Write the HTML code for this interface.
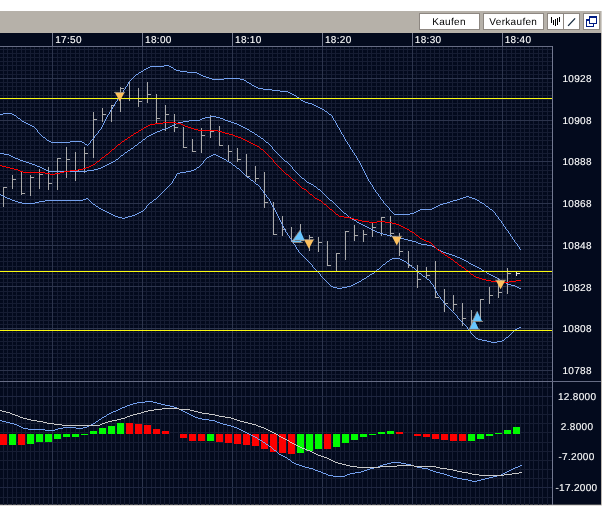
<!DOCTYPE html>
<html><head><meta charset="utf-8"><title>Chart</title>
<style>html,body{margin:0;padding:0;background:#fff;overflow:hidden}svg{display:block;will-change:transform}text{font-family:"Liberation Sans",sans-serif;font-size:10px;letter-spacing:0.32px;text-rendering:geometricPrecision;stroke-width:0.12px}</style>
</head><body>
<svg width="603" height="507" viewBox="0 0 603 507">
<rect x="0" y="0" width="603" height="507" fill="#ffffff"/>
<rect x="0" y="11" width="601.6" height="22" fill="#b6b1a9"/>
<rect x="0" y="33" width="601.8" height="472.4" fill="#aca69e"/>
<rect x="0" y="33" width="601" height="471.6" fill="#030a1d"/>
<g shape-rendering="crispEdges">
<rect x="3" y="47" width="1" height="334" fill="#161d33"/>
<rect x="3" y="382" width="1" height="123" fill="#161d33"/>
<rect x="7" y="47" width="1" height="334" fill="#161d33"/>
<rect x="7" y="382" width="1" height="123" fill="#161d33"/>
<rect x="12" y="47" width="1" height="334" fill="#161d33"/>
<rect x="12" y="382" width="1" height="123" fill="#161d33"/>
<rect x="16" y="47" width="1" height="334" fill="#161d33"/>
<rect x="16" y="382" width="1" height="123" fill="#161d33"/>
<rect x="21" y="47" width="1" height="334" fill="#161d33"/>
<rect x="21" y="382" width="1" height="123" fill="#161d33"/>
<rect x="25" y="47" width="1" height="334" fill="#161d33"/>
<rect x="25" y="382" width="1" height="123" fill="#161d33"/>
<rect x="30" y="47" width="1" height="334" fill="#161d33"/>
<rect x="30" y="382" width="1" height="123" fill="#161d33"/>
<rect x="34" y="47" width="1" height="334" fill="#161d33"/>
<rect x="34" y="382" width="1" height="123" fill="#161d33"/>
<rect x="39" y="47" width="1" height="334" fill="#161d33"/>
<rect x="39" y="382" width="1" height="123" fill="#161d33"/>
<rect x="43" y="47" width="1" height="334" fill="#161d33"/>
<rect x="43" y="382" width="1" height="123" fill="#161d33"/>
<rect x="48" y="47" width="1" height="334" fill="#161d33"/>
<rect x="48" y="382" width="1" height="123" fill="#161d33"/>
<rect x="52" y="47" width="1" height="334" fill="#161d33"/>
<rect x="52" y="382" width="1" height="123" fill="#161d33"/>
<rect x="57" y="47" width="1" height="334" fill="#161d33"/>
<rect x="57" y="382" width="1" height="123" fill="#161d33"/>
<rect x="61" y="47" width="1" height="334" fill="#161d33"/>
<rect x="61" y="382" width="1" height="123" fill="#161d33"/>
<rect x="66" y="47" width="1" height="334" fill="#161d33"/>
<rect x="66" y="382" width="1" height="123" fill="#161d33"/>
<rect x="70" y="47" width="1" height="334" fill="#161d33"/>
<rect x="70" y="382" width="1" height="123" fill="#161d33"/>
<rect x="75" y="47" width="1" height="334" fill="#161d33"/>
<rect x="75" y="382" width="1" height="123" fill="#161d33"/>
<rect x="79" y="47" width="1" height="334" fill="#161d33"/>
<rect x="79" y="382" width="1" height="123" fill="#161d33"/>
<rect x="84" y="47" width="1" height="334" fill="#161d33"/>
<rect x="84" y="382" width="1" height="123" fill="#161d33"/>
<rect x="88" y="47" width="1" height="334" fill="#161d33"/>
<rect x="88" y="382" width="1" height="123" fill="#161d33"/>
<rect x="93" y="47" width="1" height="334" fill="#161d33"/>
<rect x="93" y="382" width="1" height="123" fill="#161d33"/>
<rect x="97" y="47" width="1" height="334" fill="#161d33"/>
<rect x="97" y="382" width="1" height="123" fill="#161d33"/>
<rect x="102" y="47" width="1" height="334" fill="#161d33"/>
<rect x="102" y="382" width="1" height="123" fill="#161d33"/>
<rect x="106" y="47" width="1" height="334" fill="#161d33"/>
<rect x="106" y="382" width="1" height="123" fill="#161d33"/>
<rect x="111" y="47" width="1" height="334" fill="#161d33"/>
<rect x="111" y="382" width="1" height="123" fill="#161d33"/>
<rect x="115" y="47" width="1" height="334" fill="#161d33"/>
<rect x="115" y="382" width="1" height="123" fill="#161d33"/>
<rect x="120" y="47" width="1" height="334" fill="#161d33"/>
<rect x="120" y="382" width="1" height="123" fill="#161d33"/>
<rect x="124" y="47" width="1" height="334" fill="#161d33"/>
<rect x="124" y="382" width="1" height="123" fill="#161d33"/>
<rect x="129" y="47" width="1" height="334" fill="#161d33"/>
<rect x="129" y="382" width="1" height="123" fill="#161d33"/>
<rect x="133" y="47" width="1" height="334" fill="#161d33"/>
<rect x="133" y="382" width="1" height="123" fill="#161d33"/>
<rect x="138" y="47" width="1" height="334" fill="#161d33"/>
<rect x="138" y="382" width="1" height="123" fill="#161d33"/>
<rect x="142" y="47" width="1" height="334" fill="#161d33"/>
<rect x="142" y="382" width="1" height="123" fill="#161d33"/>
<rect x="146" y="47" width="1" height="334" fill="#161d33"/>
<rect x="146" y="382" width="1" height="123" fill="#161d33"/>
<rect x="151" y="47" width="1" height="334" fill="#161d33"/>
<rect x="151" y="382" width="1" height="123" fill="#161d33"/>
<rect x="155" y="47" width="1" height="334" fill="#161d33"/>
<rect x="155" y="382" width="1" height="123" fill="#161d33"/>
<rect x="160" y="47" width="1" height="334" fill="#161d33"/>
<rect x="160" y="382" width="1" height="123" fill="#161d33"/>
<rect x="164" y="47" width="1" height="334" fill="#161d33"/>
<rect x="164" y="382" width="1" height="123" fill="#161d33"/>
<rect x="169" y="47" width="1" height="334" fill="#161d33"/>
<rect x="169" y="382" width="1" height="123" fill="#161d33"/>
<rect x="173" y="47" width="1" height="334" fill="#161d33"/>
<rect x="173" y="382" width="1" height="123" fill="#161d33"/>
<rect x="178" y="47" width="1" height="334" fill="#161d33"/>
<rect x="178" y="382" width="1" height="123" fill="#161d33"/>
<rect x="182" y="47" width="1" height="334" fill="#161d33"/>
<rect x="182" y="382" width="1" height="123" fill="#161d33"/>
<rect x="187" y="47" width="1" height="334" fill="#161d33"/>
<rect x="187" y="382" width="1" height="123" fill="#161d33"/>
<rect x="191" y="47" width="1" height="334" fill="#161d33"/>
<rect x="191" y="382" width="1" height="123" fill="#161d33"/>
<rect x="196" y="47" width="1" height="334" fill="#161d33"/>
<rect x="196" y="382" width="1" height="123" fill="#161d33"/>
<rect x="200" y="47" width="1" height="334" fill="#161d33"/>
<rect x="200" y="382" width="1" height="123" fill="#161d33"/>
<rect x="205" y="47" width="1" height="334" fill="#161d33"/>
<rect x="205" y="382" width="1" height="123" fill="#161d33"/>
<rect x="209" y="47" width="1" height="334" fill="#161d33"/>
<rect x="209" y="382" width="1" height="123" fill="#161d33"/>
<rect x="214" y="47" width="1" height="334" fill="#161d33"/>
<rect x="214" y="382" width="1" height="123" fill="#161d33"/>
<rect x="218" y="47" width="1" height="334" fill="#161d33"/>
<rect x="218" y="382" width="1" height="123" fill="#161d33"/>
<rect x="223" y="47" width="1" height="334" fill="#161d33"/>
<rect x="223" y="382" width="1" height="123" fill="#161d33"/>
<rect x="227" y="47" width="1" height="334" fill="#161d33"/>
<rect x="227" y="382" width="1" height="123" fill="#161d33"/>
<rect x="232" y="47" width="1" height="334" fill="#161d33"/>
<rect x="232" y="382" width="1" height="123" fill="#161d33"/>
<rect x="236" y="47" width="1" height="334" fill="#161d33"/>
<rect x="236" y="382" width="1" height="123" fill="#161d33"/>
<rect x="241" y="47" width="1" height="334" fill="#161d33"/>
<rect x="241" y="382" width="1" height="123" fill="#161d33"/>
<rect x="245" y="47" width="1" height="334" fill="#161d33"/>
<rect x="245" y="382" width="1" height="123" fill="#161d33"/>
<rect x="250" y="47" width="1" height="334" fill="#161d33"/>
<rect x="250" y="382" width="1" height="123" fill="#161d33"/>
<rect x="254" y="47" width="1" height="334" fill="#161d33"/>
<rect x="254" y="382" width="1" height="123" fill="#161d33"/>
<rect x="259" y="47" width="1" height="334" fill="#161d33"/>
<rect x="259" y="382" width="1" height="123" fill="#161d33"/>
<rect x="263" y="47" width="1" height="334" fill="#161d33"/>
<rect x="263" y="382" width="1" height="123" fill="#161d33"/>
<rect x="268" y="47" width="1" height="334" fill="#161d33"/>
<rect x="268" y="382" width="1" height="123" fill="#161d33"/>
<rect x="272" y="47" width="1" height="334" fill="#161d33"/>
<rect x="272" y="382" width="1" height="123" fill="#161d33"/>
<rect x="277" y="47" width="1" height="334" fill="#161d33"/>
<rect x="277" y="382" width="1" height="123" fill="#161d33"/>
<rect x="281" y="47" width="1" height="334" fill="#161d33"/>
<rect x="281" y="382" width="1" height="123" fill="#161d33"/>
<rect x="286" y="47" width="1" height="334" fill="#161d33"/>
<rect x="286" y="382" width="1" height="123" fill="#161d33"/>
<rect x="290" y="47" width="1" height="334" fill="#161d33"/>
<rect x="290" y="382" width="1" height="123" fill="#161d33"/>
<rect x="295" y="47" width="1" height="334" fill="#161d33"/>
<rect x="295" y="382" width="1" height="123" fill="#161d33"/>
<rect x="299" y="47" width="1" height="334" fill="#161d33"/>
<rect x="299" y="382" width="1" height="123" fill="#161d33"/>
<rect x="304" y="47" width="1" height="334" fill="#161d33"/>
<rect x="304" y="382" width="1" height="123" fill="#161d33"/>
<rect x="308" y="47" width="1" height="334" fill="#161d33"/>
<rect x="308" y="382" width="1" height="123" fill="#161d33"/>
<rect x="313" y="47" width="1" height="334" fill="#161d33"/>
<rect x="313" y="382" width="1" height="123" fill="#161d33"/>
<rect x="317" y="47" width="1" height="334" fill="#161d33"/>
<rect x="317" y="382" width="1" height="123" fill="#161d33"/>
<rect x="322" y="47" width="1" height="334" fill="#161d33"/>
<rect x="322" y="382" width="1" height="123" fill="#161d33"/>
<rect x="326" y="47" width="1" height="334" fill="#161d33"/>
<rect x="326" y="382" width="1" height="123" fill="#161d33"/>
<rect x="331" y="47" width="1" height="334" fill="#161d33"/>
<rect x="331" y="382" width="1" height="123" fill="#161d33"/>
<rect x="335" y="47" width="1" height="334" fill="#161d33"/>
<rect x="335" y="382" width="1" height="123" fill="#161d33"/>
<rect x="340" y="47" width="1" height="334" fill="#161d33"/>
<rect x="340" y="382" width="1" height="123" fill="#161d33"/>
<rect x="344" y="47" width="1" height="334" fill="#161d33"/>
<rect x="344" y="382" width="1" height="123" fill="#161d33"/>
<rect x="349" y="47" width="1" height="334" fill="#161d33"/>
<rect x="349" y="382" width="1" height="123" fill="#161d33"/>
<rect x="353" y="47" width="1" height="334" fill="#161d33"/>
<rect x="353" y="382" width="1" height="123" fill="#161d33"/>
<rect x="358" y="47" width="1" height="334" fill="#161d33"/>
<rect x="358" y="382" width="1" height="123" fill="#161d33"/>
<rect x="362" y="47" width="1" height="334" fill="#161d33"/>
<rect x="362" y="382" width="1" height="123" fill="#161d33"/>
<rect x="367" y="47" width="1" height="334" fill="#161d33"/>
<rect x="367" y="382" width="1" height="123" fill="#161d33"/>
<rect x="371" y="47" width="1" height="334" fill="#161d33"/>
<rect x="371" y="382" width="1" height="123" fill="#161d33"/>
<rect x="376" y="47" width="1" height="334" fill="#161d33"/>
<rect x="376" y="382" width="1" height="123" fill="#161d33"/>
<rect x="380" y="47" width="1" height="334" fill="#161d33"/>
<rect x="380" y="382" width="1" height="123" fill="#161d33"/>
<rect x="385" y="47" width="1" height="334" fill="#161d33"/>
<rect x="385" y="382" width="1" height="123" fill="#161d33"/>
<rect x="389" y="47" width="1" height="334" fill="#161d33"/>
<rect x="389" y="382" width="1" height="123" fill="#161d33"/>
<rect x="394" y="47" width="1" height="334" fill="#161d33"/>
<rect x="394" y="382" width="1" height="123" fill="#161d33"/>
<rect x="398" y="47" width="1" height="334" fill="#161d33"/>
<rect x="398" y="382" width="1" height="123" fill="#161d33"/>
<rect x="403" y="47" width="1" height="334" fill="#161d33"/>
<rect x="403" y="382" width="1" height="123" fill="#161d33"/>
<rect x="407" y="47" width="1" height="334" fill="#161d33"/>
<rect x="407" y="382" width="1" height="123" fill="#161d33"/>
<rect x="412" y="47" width="1" height="334" fill="#161d33"/>
<rect x="412" y="382" width="1" height="123" fill="#161d33"/>
<rect x="416" y="47" width="1" height="334" fill="#161d33"/>
<rect x="416" y="382" width="1" height="123" fill="#161d33"/>
<rect x="421" y="47" width="1" height="334" fill="#161d33"/>
<rect x="421" y="382" width="1" height="123" fill="#161d33"/>
<rect x="425" y="47" width="1" height="334" fill="#161d33"/>
<rect x="425" y="382" width="1" height="123" fill="#161d33"/>
<rect x="430" y="47" width="1" height="334" fill="#161d33"/>
<rect x="430" y="382" width="1" height="123" fill="#161d33"/>
<rect x="434" y="47" width="1" height="334" fill="#161d33"/>
<rect x="434" y="382" width="1" height="123" fill="#161d33"/>
<rect x="439" y="47" width="1" height="334" fill="#161d33"/>
<rect x="439" y="382" width="1" height="123" fill="#161d33"/>
<rect x="443" y="47" width="1" height="334" fill="#161d33"/>
<rect x="443" y="382" width="1" height="123" fill="#161d33"/>
<rect x="448" y="47" width="1" height="334" fill="#161d33"/>
<rect x="448" y="382" width="1" height="123" fill="#161d33"/>
<rect x="452" y="47" width="1" height="334" fill="#161d33"/>
<rect x="452" y="382" width="1" height="123" fill="#161d33"/>
<rect x="457" y="47" width="1" height="334" fill="#161d33"/>
<rect x="457" y="382" width="1" height="123" fill="#161d33"/>
<rect x="461" y="47" width="1" height="334" fill="#161d33"/>
<rect x="461" y="382" width="1" height="123" fill="#161d33"/>
<rect x="466" y="47" width="1" height="334" fill="#161d33"/>
<rect x="466" y="382" width="1" height="123" fill="#161d33"/>
<rect x="470" y="47" width="1" height="334" fill="#161d33"/>
<rect x="470" y="382" width="1" height="123" fill="#161d33"/>
<rect x="475" y="47" width="1" height="334" fill="#161d33"/>
<rect x="475" y="382" width="1" height="123" fill="#161d33"/>
<rect x="479" y="47" width="1" height="334" fill="#161d33"/>
<rect x="479" y="382" width="1" height="123" fill="#161d33"/>
<rect x="484" y="47" width="1" height="334" fill="#161d33"/>
<rect x="484" y="382" width="1" height="123" fill="#161d33"/>
<rect x="488" y="47" width="1" height="334" fill="#161d33"/>
<rect x="488" y="382" width="1" height="123" fill="#161d33"/>
<rect x="493" y="47" width="1" height="334" fill="#161d33"/>
<rect x="493" y="382" width="1" height="123" fill="#161d33"/>
<rect x="497" y="47" width="1" height="334" fill="#161d33"/>
<rect x="497" y="382" width="1" height="123" fill="#161d33"/>
<rect x="502" y="47" width="1" height="334" fill="#161d33"/>
<rect x="502" y="382" width="1" height="123" fill="#161d33"/>
<rect x="506" y="47" width="1" height="334" fill="#161d33"/>
<rect x="506" y="382" width="1" height="123" fill="#161d33"/>
<rect x="511" y="47" width="1" height="334" fill="#161d33"/>
<rect x="511" y="382" width="1" height="123" fill="#161d33"/>
<rect x="515" y="47" width="1" height="334" fill="#161d33"/>
<rect x="515" y="382" width="1" height="123" fill="#161d33"/>
<rect x="520" y="47" width="1" height="334" fill="#161d33"/>
<rect x="520" y="382" width="1" height="123" fill="#161d33"/>
<rect x="524" y="47" width="1" height="334" fill="#161d33"/>
<rect x="524" y="382" width="1" height="123" fill="#161d33"/>
<rect x="529" y="47" width="1" height="334" fill="#161d33"/>
<rect x="529" y="382" width="1" height="123" fill="#161d33"/>
<rect x="533" y="47" width="1" height="334" fill="#161d33"/>
<rect x="533" y="382" width="1" height="123" fill="#161d33"/>
<rect x="538" y="47" width="1" height="334" fill="#161d33"/>
<rect x="538" y="382" width="1" height="123" fill="#161d33"/>
<rect x="542" y="47" width="1" height="334" fill="#161d33"/>
<rect x="542" y="382" width="1" height="123" fill="#161d33"/>
<rect x="547" y="47" width="1" height="334" fill="#161d33"/>
<rect x="547" y="382" width="1" height="123" fill="#161d33"/>
<rect x="0" y="49" width="552" height="1" fill="#161d33"/>
<rect x="0" y="53" width="552" height="1" fill="#161d33"/>
<rect x="0" y="57" width="552" height="1" fill="#161d33"/>
<rect x="0" y="61" width="552" height="1" fill="#161d33"/>
<rect x="0" y="65" width="552" height="1" fill="#161d33"/>
<rect x="0" y="70" width="552" height="1" fill="#161d33"/>
<rect x="0" y="74" width="552" height="1" fill="#161d33"/>
<rect x="0" y="78" width="552" height="1" fill="#161d33"/>
<rect x="0" y="82" width="552" height="1" fill="#161d33"/>
<rect x="0" y="86" width="552" height="1" fill="#161d33"/>
<rect x="0" y="90" width="552" height="1" fill="#161d33"/>
<rect x="0" y="95" width="552" height="1" fill="#161d33"/>
<rect x="0" y="99" width="552" height="1" fill="#161d33"/>
<rect x="0" y="103" width="552" height="1" fill="#161d33"/>
<rect x="0" y="107" width="552" height="1" fill="#161d33"/>
<rect x="0" y="111" width="552" height="1" fill="#161d33"/>
<rect x="0" y="115" width="552" height="1" fill="#161d33"/>
<rect x="0" y="120" width="552" height="1" fill="#161d33"/>
<rect x="0" y="124" width="552" height="1" fill="#161d33"/>
<rect x="0" y="128" width="552" height="1" fill="#161d33"/>
<rect x="0" y="132" width="552" height="1" fill="#161d33"/>
<rect x="0" y="136" width="552" height="1" fill="#161d33"/>
<rect x="0" y="140" width="552" height="1" fill="#161d33"/>
<rect x="0" y="145" width="552" height="1" fill="#161d33"/>
<rect x="0" y="149" width="552" height="1" fill="#161d33"/>
<rect x="0" y="153" width="552" height="1" fill="#161d33"/>
<rect x="0" y="157" width="552" height="1" fill="#161d33"/>
<rect x="0" y="161" width="552" height="1" fill="#161d33"/>
<rect x="0" y="165" width="552" height="1" fill="#161d33"/>
<rect x="0" y="170" width="552" height="1" fill="#161d33"/>
<rect x="0" y="174" width="552" height="1" fill="#161d33"/>
<rect x="0" y="178" width="552" height="1" fill="#161d33"/>
<rect x="0" y="182" width="552" height="1" fill="#161d33"/>
<rect x="0" y="186" width="552" height="1" fill="#161d33"/>
<rect x="0" y="191" width="552" height="1" fill="#161d33"/>
<rect x="0" y="195" width="552" height="1" fill="#161d33"/>
<rect x="0" y="199" width="552" height="1" fill="#161d33"/>
<rect x="0" y="203" width="552" height="1" fill="#161d33"/>
<rect x="0" y="207" width="552" height="1" fill="#161d33"/>
<rect x="0" y="211" width="552" height="1" fill="#161d33"/>
<rect x="0" y="216" width="552" height="1" fill="#161d33"/>
<rect x="0" y="220" width="552" height="1" fill="#161d33"/>
<rect x="0" y="224" width="552" height="1" fill="#161d33"/>
<rect x="0" y="228" width="552" height="1" fill="#161d33"/>
<rect x="0" y="232" width="552" height="1" fill="#161d33"/>
<rect x="0" y="236" width="552" height="1" fill="#161d33"/>
<rect x="0" y="241" width="552" height="1" fill="#161d33"/>
<rect x="0" y="245" width="552" height="1" fill="#161d33"/>
<rect x="0" y="249" width="552" height="1" fill="#161d33"/>
<rect x="0" y="253" width="552" height="1" fill="#161d33"/>
<rect x="0" y="257" width="552" height="1" fill="#161d33"/>
<rect x="0" y="261" width="552" height="1" fill="#161d33"/>
<rect x="0" y="266" width="552" height="1" fill="#161d33"/>
<rect x="0" y="270" width="552" height="1" fill="#161d33"/>
<rect x="0" y="274" width="552" height="1" fill="#161d33"/>
<rect x="0" y="278" width="552" height="1" fill="#161d33"/>
<rect x="0" y="282" width="552" height="1" fill="#161d33"/>
<rect x="0" y="286" width="552" height="1" fill="#161d33"/>
<rect x="0" y="291" width="552" height="1" fill="#161d33"/>
<rect x="0" y="295" width="552" height="1" fill="#161d33"/>
<rect x="0" y="299" width="552" height="1" fill="#161d33"/>
<rect x="0" y="303" width="552" height="1" fill="#161d33"/>
<rect x="0" y="307" width="552" height="1" fill="#161d33"/>
<rect x="0" y="312" width="552" height="1" fill="#161d33"/>
<rect x="0" y="316" width="552" height="1" fill="#161d33"/>
<rect x="0" y="320" width="552" height="1" fill="#161d33"/>
<rect x="0" y="324" width="552" height="1" fill="#161d33"/>
<rect x="0" y="328" width="552" height="1" fill="#161d33"/>
<rect x="0" y="332" width="552" height="1" fill="#161d33"/>
<rect x="0" y="337" width="552" height="1" fill="#161d33"/>
<rect x="0" y="341" width="552" height="1" fill="#161d33"/>
<rect x="0" y="345" width="552" height="1" fill="#161d33"/>
<rect x="0" y="349" width="552" height="1" fill="#161d33"/>
<rect x="0" y="353" width="552" height="1" fill="#161d33"/>
<rect x="0" y="357" width="552" height="1" fill="#161d33"/>
<rect x="0" y="362" width="552" height="1" fill="#161d33"/>
<rect x="0" y="366" width="552" height="1" fill="#161d33"/>
<rect x="0" y="370" width="552" height="1" fill="#161d33"/>
<rect x="0" y="374" width="552" height="1" fill="#161d33"/>
<rect x="0" y="378" width="552" height="1" fill="#161d33"/>
<rect x="0" y="387" width="552" height="1" fill="#161d33"/>
<rect x="0" y="396" width="552" height="1" fill="#161d33"/>
<rect x="0" y="405" width="552" height="1" fill="#161d33"/>
<rect x="0" y="414" width="552" height="1" fill="#161d33"/>
<rect x="0" y="423" width="552" height="1" fill="#161d33"/>
<rect x="0" y="432" width="552" height="1" fill="#161d33"/>
<rect x="0" y="442" width="552" height="1" fill="#161d33"/>
<rect x="0" y="451" width="552" height="1" fill="#161d33"/>
<rect x="0" y="460" width="552" height="1" fill="#161d33"/>
<rect x="0" y="469" width="552" height="1" fill="#161d33"/>
<rect x="0" y="478" width="552" height="1" fill="#161d33"/>
<rect x="0" y="487" width="552" height="1" fill="#161d33"/>
<rect x="0" y="497" width="552" height="1" fill="#161d33"/>
<rect x="52" y="47" width="1" height="334" fill="#2c344c"/>
<rect x="52" y="382" width="1" height="123" fill="#2c344c"/>
<rect x="52" y="33" width="1" height="14" fill="#747a90"/>
<rect x="142" y="47" width="1" height="334" fill="#2c344c"/>
<rect x="142" y="382" width="1" height="123" fill="#2c344c"/>
<rect x="142" y="33" width="1" height="14" fill="#747a90"/>
<rect x="232" y="47" width="1" height="334" fill="#2c344c"/>
<rect x="232" y="382" width="1" height="123" fill="#2c344c"/>
<rect x="232" y="33" width="1" height="14" fill="#747a90"/>
<rect x="322" y="47" width="1" height="334" fill="#2c344c"/>
<rect x="322" y="382" width="1" height="123" fill="#2c344c"/>
<rect x="322" y="33" width="1" height="14" fill="#747a90"/>
<rect x="412" y="47" width="1" height="334" fill="#2c344c"/>
<rect x="412" y="382" width="1" height="123" fill="#2c344c"/>
<rect x="412" y="33" width="1" height="14" fill="#747a90"/>
<rect x="502" y="47" width="1" height="334" fill="#2c344c"/>
<rect x="502" y="382" width="1" height="123" fill="#2c344c"/>
<rect x="502" y="33" width="1" height="14" fill="#747a90"/>
<rect x="0" y="78" width="552" height="1" fill="#2c344c"/>
<rect x="0" y="120" width="552" height="1" fill="#2c344c"/>
<rect x="0" y="161" width="552" height="1" fill="#2c344c"/>
<rect x="0" y="203" width="552" height="1" fill="#2c344c"/>
<rect x="0" y="245" width="552" height="1" fill="#2c344c"/>
<rect x="0" y="286" width="552" height="1" fill="#2c344c"/>
<rect x="0" y="328" width="552" height="1" fill="#2c344c"/>
<rect x="0" y="370" width="552" height="1" fill="#2c344c"/>
<rect x="0" y="396" width="552" height="1" fill="#1e2640"/>
<rect x="0" y="487" width="552" height="1" fill="#1e2640"/>
<rect x="0" y="46" width="553" height="1" fill="#666c84"/>
<rect x="552" y="46" width="1" height="459" fill="#737991"/>
<rect x="0" y="381" width="601" height="1" fill="#666c84"/>
</g>
<text x="55.2" y="43.4" fill="#ffffff" stroke="#ffffff">17:50</text>
<text x="145.1" y="43.4" fill="#ffffff" stroke="#ffffff">18:00</text>
<text x="235.0" y="43.4" fill="#ffffff" stroke="#ffffff">18:10</text>
<text x="324.9" y="43.4" fill="#ffffff" stroke="#ffffff">18:20</text>
<text x="414.8" y="43.4" fill="#ffffff" stroke="#ffffff">18:30</text>
<text x="504.7" y="43.4" fill="#ffffff" stroke="#ffffff">18:40</text>
<text x="577.1" y="81.8" fill="#ffffff" stroke="#ffffff" text-anchor="middle">10928</text>
<text x="577.1" y="123.6" fill="#ffffff" stroke="#ffffff" text-anchor="middle">10908</text>
<text x="577.1" y="165.3" fill="#ffffff" stroke="#ffffff" text-anchor="middle">10888</text>
<text x="577.1" y="207.0" fill="#ffffff" stroke="#ffffff" text-anchor="middle">10868</text>
<text x="577.1" y="248.7" fill="#ffffff" stroke="#ffffff" text-anchor="middle">10848</text>
<text x="577.1" y="290.5" fill="#ffffff" stroke="#ffffff" text-anchor="middle">10828</text>
<text x="577.1" y="332.2" fill="#ffffff" stroke="#ffffff" text-anchor="middle">10808</text>
<text x="577.1" y="373.9" fill="#ffffff" stroke="#ffffff" text-anchor="middle">10788</text>
<text x="577.1" y="400.1" fill="#ffffff" stroke="#ffffff" text-anchor="middle">12.8000</text>
<text x="577.1" y="430.1" fill="#ffffff" stroke="#ffffff" text-anchor="middle">2.8000</text>
<text x="576.5" y="460.1" fill="#ffffff" stroke="#ffffff" text-anchor="middle">-7.2000</text>
<text x="576.5" y="491.2" fill="#ffffff" stroke="#ffffff" text-anchor="middle">-17.2000</text>
<g shape-rendering="crispEdges" fill="#a9a9a9">
<rect x="3" y="187" width="1" height="20"/>
<rect x="4" y="187" width="3" height="1"/>
<rect x="12" y="175" width="1" height="14"/>
<rect x="13" y="179" width="3" height="1"/>
<rect x="21" y="172" width="1" height="23"/>
<rect x="22" y="193" width="3" height="1"/>
<rect x="30" y="175" width="1" height="21"/>
<rect x="31" y="177" width="3" height="1"/>
<rect x="39" y="169" width="1" height="20"/>
<rect x="40" y="174" width="3" height="1"/>
<rect x="48" y="167" width="1" height="23"/>
<rect x="49" y="183" width="3" height="1"/>
<rect x="57" y="158" width="1" height="32"/>
<rect x="58" y="158" width="3" height="1"/>
<rect x="66" y="147" width="1" height="31"/>
<rect x="67" y="159" width="3" height="1"/>
<rect x="75" y="152" width="1" height="29"/>
<rect x="76" y="170" width="3" height="1"/>
<rect x="84" y="147" width="1" height="26"/>
<rect x="85" y="153" width="3" height="1"/>
<rect x="93" y="112" width="1" height="46"/>
<rect x="94" y="119" width="3" height="1"/>
<rect x="102" y="108" width="1" height="14"/>
<rect x="103" y="114" width="3" height="1"/>
<rect x="111" y="105" width="1" height="17"/>
<rect x="112" y="105" width="3" height="1"/>
<rect x="120" y="87" width="1" height="25"/>
<rect x="121" y="88" width="3" height="1"/>
<rect x="129" y="81" width="1" height="20"/>
<rect x="130" y="98" width="3" height="1"/>
<rect x="138" y="88" width="1" height="19"/>
<rect x="139" y="101" width="3" height="1"/>
<rect x="147" y="82" width="1" height="21"/>
<rect x="148" y="94" width="3" height="1"/>
<rect x="156" y="94" width="1" height="29"/>
<rect x="157" y="118" width="3" height="1"/>
<rect x="165" y="105" width="1" height="26"/>
<rect x="166" y="114" width="3" height="1"/>
<rect x="174" y="114" width="1" height="18"/>
<rect x="175" y="127" width="3" height="1"/>
<rect x="183" y="127" width="1" height="21"/>
<rect x="184" y="147" width="3" height="1"/>
<rect x="192" y="139" width="1" height="13"/>
<rect x="193" y="151" width="3" height="1"/>
<rect x="201" y="128" width="1" height="25"/>
<rect x="202" y="135" width="3" height="1"/>
<rect x="210" y="115" width="1" height="23"/>
<rect x="211" y="131" width="3" height="1"/>
<rect x="219" y="126" width="1" height="20"/>
<rect x="220" y="145" width="3" height="1"/>
<rect x="228" y="145" width="1" height="16"/>
<rect x="229" y="151" width="3" height="1"/>
<rect x="237" y="148" width="1" height="14"/>
<rect x="238" y="159" width="3" height="1"/>
<rect x="246" y="154" width="1" height="23"/>
<rect x="247" y="176" width="3" height="1"/>
<rect x="255" y="166" width="1" height="16"/>
<rect x="256" y="178" width="3" height="1"/>
<rect x="264" y="172" width="1" height="36"/>
<rect x="265" y="202" width="3" height="1"/>
<rect x="273" y="202" width="1" height="33"/>
<rect x="274" y="234" width="3" height="1"/>
<rect x="282" y="216" width="1" height="20"/>
<rect x="283" y="229" width="3" height="1"/>
<rect x="291" y="227" width="1" height="15"/>
<rect x="292" y="240" width="3" height="1"/>
<rect x="300" y="224" width="1" height="18"/>
<rect x="301" y="240" width="3" height="1"/>
<rect x="309" y="235" width="1" height="16"/>
<rect x="310" y="237" width="3" height="1"/>
<rect x="318" y="237" width="1" height="15"/>
<rect x="319" y="242" width="3" height="1"/>
<rect x="327" y="241" width="1" height="25"/>
<rect x="328" y="265" width="3" height="1"/>
<rect x="336" y="253" width="1" height="19"/>
<rect x="337" y="253" width="3" height="1"/>
<rect x="345" y="231" width="1" height="29"/>
<rect x="346" y="231" width="3" height="1"/>
<rect x="354" y="225" width="1" height="16"/>
<rect x="355" y="235" width="3" height="1"/>
<rect x="363" y="230" width="1" height="12"/>
<rect x="364" y="234" width="3" height="1"/>
<rect x="372" y="223" width="1" height="14"/>
<rect x="373" y="227" width="3" height="1"/>
<rect x="381" y="217" width="1" height="19"/>
<rect x="382" y="217" width="3" height="1"/>
<rect x="390" y="216" width="1" height="21"/>
<rect x="391" y="233" width="3" height="1"/>
<rect x="399" y="233" width="1" height="23"/>
<rect x="400" y="251" width="3" height="1"/>
<rect x="408" y="251" width="1" height="17"/>
<rect x="409" y="265" width="3" height="1"/>
<rect x="417" y="265" width="1" height="23"/>
<rect x="418" y="279" width="3" height="1"/>
<rect x="426" y="267" width="1" height="12"/>
<rect x="427" y="275" width="3" height="1"/>
<rect x="435" y="261" width="1" height="37"/>
<rect x="436" y="297" width="3" height="1"/>
<rect x="444" y="289" width="1" height="23"/>
<rect x="445" y="303" width="3" height="1"/>
<rect x="453" y="295" width="1" height="16"/>
<rect x="454" y="304" width="3" height="1"/>
<rect x="462" y="303" width="1" height="23"/>
<rect x="463" y="318" width="3" height="1"/>
<rect x="471" y="310" width="1" height="18"/>
<rect x="472" y="320" width="3" height="1"/>
<rect x="480" y="299" width="1" height="21"/>
<rect x="481" y="299" width="3" height="1"/>
<rect x="489" y="287" width="1" height="17"/>
<rect x="490" y="295" width="3" height="1"/>
<rect x="498" y="278" width="1" height="20"/>
<rect x="499" y="292" width="3" height="1"/>
<rect x="507" y="268" width="1" height="26"/>
<rect x="508" y="273" width="3" height="1"/>
<rect x="516" y="272" width="1" height="4" fill="#e6e6e6"/><rect x="517" y="273" width="3" height="1" fill="#e6e6e6"/>
</g>
<path d="M420 209h12v1h-12zM490 209h2v1h-2zM141 71h2v1h-2zM180 71h7v1h-7zM51 142h19v1h-19zM82 142h2v1h-2zM203 76h3v1h-3zM308 103h4v1h-4zM438 205h2v1h-2zM146 68h2v1h-2zM212 79h12v1h-12zM240 79h4v1h-4zM301 100h2v1h-2zM457 199h3v1h-3zM475 199h2v1h-2zM394 214h16v1h-16zM453 200h4v1h-4zM477 200h2v1h-2zM443 203h4v1h-4zM482 203h2v1h-2zM150 66h14v1h-14zM169 66h2v1h-2zM49 141h2v1h-2zM70 141h12v1h-12zM318 107h2v1h-2zM256 87h2v1h-2zM432 208h2v1h-2zM206 77h3v1h-3zM197 73h2v1h-2zM320 108h2v1h-2zM263 89h9v1h-9zM312 104h2v1h-2zM288 92h2v1h-2zM136 74h2v1h-2zM199 74h2v1h-2zM410 213h4v1h-4zM30 125h2v1h-2zM43 137h2v1h-2zM322 109h2v1h-2zM314 105h2v1h-2zM28 124h2v1h-2zM252 85h2v1h-2zM201 75h2v1h-2zM280 91h8v1h-8zM316 106h2v1h-2zM209 78h3v1h-3zM224 78h16v1h-16zM139 72h2v1h-2zM187 72h10v1h-10zM26 123h2v1h-2zM292 94h2v1h-2zM272 90h8v1h-8zM463 197h3v1h-3zM469 197h3v1h-3zM254 86h2v1h-2zM22 121h2v1h-2zM297 97h2v1h-2zM258 88h5v1h-5zM32 126h2v1h-2zM24 122h2v1h-2zM447 202h3v1h-3zM480 202h2v1h-2zM244 80h2v1h-2zM247 82h2v1h-2zM164 65h5v1h-5zM18 118h2v1h-2zM416 211h2v1h-2zM148 67h2v1h-2zM171 67h2v1h-2zM414 212h2v1h-2zM47 140h2v1h-2zM3 113h9v1h-9zM460 198h3v1h-3zM472 198h3v1h-3zM85 144h2v1h-2zM0 114h3v1h-3zM12 114h2v1h-2zM329 114h2v1h-2zM418 210h2v1h-2zM144 69h2v1h-2zM174 69h2v1h-2zM466 196h3v1h-3zM249 83h2v1h-2zM14 115h2v1h-2zM176 70h4v1h-4zM450 201h3v1h-3zM303 101h2v1h-2zM305 102h3v1h-3zM290 93h2v1h-2zM325 111h2v1h-2zM440 204h3v1h-3zM294 95h2v1h-2zM436 206h2v1h-2zM486 206h2v1h-2zM434 207h2v1h-2zM16 116h1v1h-1zM17 117h1v1h-1zM20 119h1v1h-1zM21 120h1v1h-1zM34 127h1v1h-1zM35 128h1v1h-1zM36 129h1v1h-1zM37 130h1v2h-1zM38 132h1v1h-1zM39 133h1v1h-1zM40 134h1v1h-1zM41 135h1v1h-1zM42 136h1v1h-1zM45 138h1v1h-1zM46 139h1v1h-1zM84 143h1v1h-1zM87 145h1v1h-1zM88 144h1v1h-1zM89 143h1v1h-1zM90 141h1v2h-1zM91 140h1v1h-1zM92 139h1v1h-1zM93 138h1v1h-1zM94 136h1v2h-1zM95 135h1v1h-1zM96 134h1v1h-1zM97 133h1v1h-1zM98 131h1v2h-1zM99 130h1v1h-1zM100 129h1v1h-1zM101 127h1v2h-1zM102 125h1v2h-1zM103 123h1v2h-1zM104 121h1v2h-1zM105 119h1v2h-1zM106 117h1v2h-1zM107 115h1v2h-1zM108 114h1v1h-1zM109 112h1v2h-1zM110 110h1v2h-1zM111 109h1v1h-1zM112 107h1v2h-1zM113 106h1v1h-1zM114 104h1v2h-1zM115 102h1v2h-1zM116 101h1v1h-1zM117 99h1v2h-1zM118 98h1v1h-1zM119 96h1v2h-1zM120 95h1v1h-1zM121 93h1v2h-1zM122 92h1v1h-1zM123 90h1v2h-1zM124 89h1v1h-1zM125 87h1v2h-1zM126 86h1v1h-1zM127 84h1v2h-1zM128 82h1v2h-1zM129 81h1v1h-1zM130 80h1v1h-1zM131 79h1v1h-1zM132 78h1v1h-1zM133 77h1v1h-1zM134 76h1v1h-1zM135 75h1v1h-1zM138 73h1v1h-1zM143 70h1v1h-1zM173 68h1v1h-1zM246 81h1v1h-1zM251 84h1v1h-1zM296 96h1v1h-1zM299 98h1v1h-1zM300 99h1v1h-1zM324 110h1v1h-1zM327 112h1v1h-1zM328 113h1v1h-1zM331 115h1v1h-1zM332 116h1v2h-1zM333 118h1v2h-1zM334 120h1v1h-1zM335 121h1v2h-1zM336 123h1v2h-1zM337 125h1v2h-1zM338 127h1v1h-1zM339 128h1v2h-1zM340 130h1v2h-1zM341 132h1v2h-1zM342 134h1v1h-1zM343 135h1v2h-1zM344 137h1v2h-1zM345 139h1v2h-1zM346 141h1v1h-1zM347 142h1v2h-1zM348 144h1v1h-1zM349 145h1v2h-1zM350 147h1v2h-1zM351 149h1v1h-1zM352 150h1v2h-1zM353 152h1v1h-1zM354 153h1v2h-1zM355 155h1v1h-1zM356 156h1v2h-1zM357 158h1v2h-1zM358 160h1v1h-1zM359 161h1v2h-1zM360 163h1v2h-1zM361 165h1v2h-1zM362 167h1v2h-1zM363 169h1v2h-1zM364 171h1v2h-1zM365 173h1v2h-1zM366 175h1v2h-1zM367 177h1v2h-1zM368 179h1v2h-1zM369 181h1v1h-1zM370 182h1v2h-1zM371 184h1v1h-1zM372 185h1v2h-1zM373 187h1v2h-1zM374 189h1v1h-1zM375 190h1v2h-1zM376 192h1v1h-1zM377 193h1v1h-1zM378 194h1v2h-1zM379 196h1v1h-1zM380 197h1v2h-1zM381 199h1v1h-1zM382 200h1v1h-1zM383 201h1v2h-1zM384 203h1v1h-1zM385 204h1v1h-1zM386 205h1v1h-1zM387 206h1v1h-1zM388 207h1v1h-1zM389 208h1v2h-1zM390 210h1v1h-1zM391 211h1v1h-1zM392 212h1v1h-1zM393 213h1v1h-1zM479 201h1v1h-1zM484 204h1v1h-1zM485 205h1v1h-1zM488 207h1v1h-1zM489 208h1v1h-1zM492 210h1v1h-1zM493 211h1v1h-1zM494 212h1v1h-1zM495 213h1v2h-1zM496 215h1v1h-1zM497 216h1v1h-1zM498 217h1v2h-1zM499 219h1v1h-1zM500 220h1v1h-1zM501 221h1v2h-1zM502 223h1v1h-1zM503 224h1v2h-1zM504 226h1v1h-1zM505 227h1v2h-1zM506 229h1v1h-1zM507 230h1v1h-1zM508 231h1v2h-1zM509 233h1v1h-1zM510 234h1v2h-1zM511 236h1v1h-1zM512 237h1v2h-1zM513 239h1v1h-1zM514 240h1v2h-1zM515 242h1v1h-1zM516 243h1v1h-1zM517 244h1v2h-1zM518 246h1v1h-1zM519 247h1v2h-1zM520 249h1v1h-1z" fill="#74a1ef" shape-rendering="crispEdges"/>
<path d="M42 168h2v1h-2zM98 168h3v1h-3zM189 120h11v1h-11zM225 120h3v1h-3zM32 164h3v1h-3zM107 164h2v1h-2zM477 267h2v1h-2zM314 186h2v1h-2zM427 245h5v1h-5zM176 123h2v1h-2zM234 123h3v1h-3zM446 253h3v1h-3zM479 268h2v1h-2zM471 264h2v1h-2zM162 129h3v1h-3zM247 129h2v1h-2zM48 171h39v1h-39zM139 142h2v1h-2zM266 142h2v1h-2zM318 189h2v1h-2zM432 246h2v1h-2zM473 265h2v1h-2zM434 247h2v1h-2zM172 125h2v1h-2zM239 125h2v1h-2zM44 169h2v1h-2zM94 169h4v1h-4zM0 153h4v1h-4zM147 136h2v1h-2zM258 136h2v1h-2zM29 163h3v1h-3zM109 163h2v1h-2zM183 121h6v1h-6zM228 121h3v1h-3zM128 150h2v1h-2zM9 155h2v1h-2zM121 155h2v1h-2zM40 167h2v1h-2zM101 167h2v1h-2zM37 166h3v1h-3zM103 166h2v1h-2zM408 240h4v1h-4zM392 236h4v1h-4zM205 117h5v1h-5zM216 117h4v1h-4zM455 256h2v1h-2zM421 244h6v1h-6zM46 170h2v1h-2zM87 170h7v1h-7zM412 241h4v1h-4zM131 148h2v1h-2zM178 122h5v1h-5zM231 122h3v1h-3zM261 138h2v1h-2zM35 165h2v1h-2zM105 165h2v1h-2zM210 116h6v1h-6zM466 261h2v1h-2zM416 242h2v1h-2zM457 257h3v1h-3zM511 285h4v1h-4zM418 243h3v1h-3zM396 237h4v1h-4zM504 282h2v1h-2zM309 183h2v1h-2zM4 154h5v1h-5zM11 156h2v1h-2zM462 259h2v1h-2zM200 119h2v1h-2zM223 119h2v1h-2zM157 131h3v1h-3zM250 131h2v1h-2zM363 225h2v1h-2zM506 283h2v1h-2zM498 279h2v1h-2zM373 230h2v1h-2zM365 226h2v1h-2zM508 284h3v1h-3zM357 222h2v1h-2zM500 280h2v1h-2zM165 128h3v1h-3zM245 128h2v1h-2zM174 124h2v1h-2zM237 124h2v1h-2zM359 223h2v1h-2zM502 281h2v1h-2zM400 238h4v1h-4zM383 234h4v1h-4zM361 224h2v1h-2zM170 126h2v1h-2zM241 126h2v1h-2zM375 231h2v1h-2zM149 135h2v1h-2zM13 157h2v1h-2zM151 134h2v1h-2zM255 134h2v1h-2zM377 232h3v1h-3zM380 233h3v1h-3zM371 229h2v1h-2zM26 162h3v1h-3zM111 162h2v1h-2zM330 200h2v1h-2zM135 145h2v1h-2zM515 286h2v1h-2zM202 118h3v1h-3zM220 118h3v1h-3zM160 130h2v1h-2zM23 161h3v1h-3zM113 161h2v1h-2zM285 161h2v1h-2zM491 275h2v1h-2zM367 227h2v1h-2zM15 158h3v1h-3zM517 287h2v1h-2zM404 239h4v1h-4zM352 219h2v1h-2zM495 277h2v1h-2zM487 273h2v1h-2zM441 251h2v1h-2zM387 235h5v1h-5zM443 252h3v1h-3zM349 217h2v1h-2zM484 271h2v1h-2zM437 249h2v1h-2zM168 127h2v1h-2zM243 127h2v1h-2zM439 250h2v1h-2zM469 263h2v1h-2zM449 254h3v1h-3zM125 152h2v1h-2zM452 255h3v1h-3zM475 266h2v1h-2zM344 213h2v1h-2zM307 182h2v1h-2zM464 260h2v1h-2zM311 184h2v1h-2zM460 258h2v1h-2zM369 228h2v1h-2zM18 159h2v1h-2zM116 159h2v1h-2zM519 288h2v1h-2zM20 160h3v1h-3zM302 178h2v1h-2zM493 276h2v1h-2zM155 132h2v1h-2zM252 132h2v1h-2zM153 133h2v1h-2zM354 220h2v1h-2zM489 274h2v1h-2zM143 139h2v1h-2zM482 270h2v1h-2zM115 160h1v1h-1zM118 158h1v1h-1zM119 157h1v1h-1zM120 156h1v1h-1zM123 154h1v1h-1zM124 153h1v1h-1zM127 151h1v1h-1zM130 149h1v1h-1zM133 147h1v1h-1zM134 146h1v1h-1zM137 144h1v1h-1zM138 143h1v1h-1zM141 141h1v1h-1zM142 140h1v1h-1zM145 138h1v1h-1zM146 137h1v1h-1zM249 130h1v1h-1zM254 133h1v1h-1zM257 135h1v1h-1zM260 137h1v1h-1zM263 139h1v1h-1zM264 140h1v1h-1zM265 141h1v1h-1zM268 143h1v1h-1zM269 144h1v1h-1zM270 145h1v1h-1zM271 146h1v1h-1zM272 147h1v2h-1zM273 149h1v1h-1zM274 150h1v1h-1zM275 151h1v1h-1zM276 152h1v1h-1zM277 153h1v1h-1zM278 154h1v1h-1zM279 155h1v1h-1zM280 156h1v1h-1zM281 157h1v1h-1zM282 158h1v1h-1zM283 159h1v1h-1zM284 160h1v1h-1zM287 162h1v1h-1zM288 163h1v1h-1zM289 164h1v1h-1zM290 165h1v1h-1zM291 166h1v1h-1zM292 167h1v2h-1zM293 169h1v1h-1zM294 170h1v1h-1zM295 171h1v1h-1zM296 172h1v1h-1zM297 173h1v1h-1zM298 174h1v1h-1zM299 175h1v1h-1zM300 176h1v1h-1zM301 177h1v1h-1zM304 179h1v1h-1zM305 180h1v1h-1zM306 181h1v1h-1zM313 185h1v1h-1zM316 187h1v1h-1zM317 188h1v1h-1zM320 190h1v1h-1zM321 191h1v1h-1zM322 192h1v1h-1zM323 193h1v1h-1zM324 194h1v1h-1zM325 195h1v1h-1zM326 196h1v1h-1zM327 197h1v1h-1zM328 198h1v1h-1zM329 199h1v1h-1zM332 201h1v1h-1zM333 202h1v1h-1zM334 203h1v1h-1zM335 204h1v1h-1zM336 205h1v1h-1zM337 206h1v1h-1zM338 207h1v1h-1zM339 208h1v1h-1zM340 209h1v1h-1zM341 210h1v1h-1zM342 211h1v1h-1zM343 212h1v1h-1zM346 214h1v1h-1zM347 215h1v1h-1zM348 216h1v1h-1zM351 218h1v1h-1zM356 221h1v1h-1zM436 248h1v1h-1zM468 262h1v1h-1zM481 269h1v1h-1zM486 272h1v1h-1zM497 278h1v1h-1z" fill="#74a1ef" shape-rendering="crispEdges"/>
<path d="M22 203h13v1h-13zM177 173h3v1h-3zM107 212h2v1h-2zM139 212h2v1h-2zM109 213h2v1h-2zM137 213h2v1h-2zM12 200h3v1h-3zM45 200h38v1h-38zM118 217h4v1h-4zM125 217h3v1h-3zM113 215h2v1h-2zM132 215h3v1h-3zM412 267h2v1h-2zM111 214h2v1h-2zM135 214h2v1h-2zM103 210h2v1h-2zM491 342h6v1h-6zM383 264h2v1h-2zM476 338h2v1h-2zM233 165h2v1h-2zM515 329h2v1h-2zM191 170h3v1h-3zM362 279h2v1h-2zM427 279h2v1h-2zM247 177h2v1h-2zM99 208h2v1h-2zM15 201h3v1h-3zM39 201h6v1h-6zM482 340h5v1h-5zM502 340h2v1h-2zM506 337h2v1h-2zM337 288h5v1h-5zM18 202h4v1h-4zM35 202h4v1h-4zM150 202h2v1h-2zM93 204h2v1h-2zM96 206h2v1h-2zM478 339h4v1h-4zM331 286h2v1h-2zM347 286h4v1h-4zM211 155h2v1h-2zM216 155h2v1h-2zM392 258h8v1h-8zM370 274h2v1h-2zM237 168h2v1h-2zM367 276h2v1h-2zM423 276h2v1h-2zM407 263h2v1h-2zM180 172h6v1h-6zM5 197h2v1h-2zM256 184h2v1h-2zM355 283h2v1h-2zM207 157h2v1h-2zM220 157h2v1h-2zM186 171h5v1h-5zM487 341h4v1h-4zM497 341h5v1h-5zM517 328h2v1h-2zM10 199h2v1h-2zM83 199h3v1h-3zM154 199h2v1h-2zM359 281h2v1h-2zM390 259h2v1h-2zM400 259h2v1h-2zM229 162h2v1h-2zM7 198h3v1h-3zM86 198h2v1h-2zM194 169h2v1h-2zM387 261h2v1h-2zM404 261h2v1h-2zM333 287h4v1h-4zM342 287h5v1h-5zM357 282h2v1h-2zM372 273h2v1h-2zM419 273h2v1h-2zM105 211h2v1h-2zM141 211h2v1h-2zM209 156h2v1h-2zM218 156h2v1h-2zM3 196h2v1h-2zM213 154h3v1h-3zM115 216h3v1h-3zM128 216h4v1h-4zM519 327h2v1h-2zM224 159h2v1h-2zM251 180h2v1h-2zM101 209h2v1h-2zM377 269h2v1h-2zM122 218h3v1h-3zM197 167h2v1h-2zM1 195h2v1h-2zM364 278h2v1h-2zM353 284h2v1h-2zM351 285h2v1h-2zM227 161h2v1h-2zM402 260h2v1h-2zM222 158h2v1h-2zM0 194h1v1h-1zM88 199h1v1h-1zM89 200h1v1h-1zM90 201h1v1h-1zM91 202h1v1h-1zM92 203h1v1h-1zM95 205h1v1h-1zM98 207h1v1h-1zM143 210h1v1h-1zM144 209h1v1h-1zM145 208h1v1h-1zM146 206h1v2h-1zM147 205h1v1h-1zM148 204h1v1h-1zM149 203h1v1h-1zM152 201h1v1h-1zM153 200h1v1h-1zM156 198h1v1h-1zM157 197h1v1h-1zM158 196h1v1h-1zM159 195h1v1h-1zM160 194h1v1h-1zM161 193h1v1h-1zM162 192h1v1h-1zM163 191h1v1h-1zM164 190h1v1h-1zM165 189h1v1h-1zM166 188h1v1h-1zM167 187h1v1h-1zM168 186h1v1h-1zM169 185h1v1h-1zM170 184h1v1h-1zM171 183h1v1h-1zM172 181h1v2h-1zM173 179h1v2h-1zM174 178h1v1h-1zM175 176h1v2h-1zM176 174h1v2h-1zM196 168h1v1h-1zM199 166h1v1h-1zM200 165h1v1h-1zM201 164h1v1h-1zM202 163h1v1h-1zM203 161h1v2h-1zM204 160h1v1h-1zM205 159h1v1h-1zM206 158h1v1h-1zM226 160h1v1h-1zM231 163h1v1h-1zM232 164h1v1h-1zM235 166h1v1h-1zM236 167h1v1h-1zM239 169h1v1h-1zM240 170h1v1h-1zM241 171h1v1h-1zM242 172h1v1h-1zM243 173h1v1h-1zM244 174h1v1h-1zM245 175h1v1h-1zM246 176h1v1h-1zM249 178h1v1h-1zM250 179h1v1h-1zM253 181h1v1h-1zM254 182h1v1h-1zM255 183h1v1h-1zM258 185h1v1h-1zM259 186h1v1h-1zM260 187h1v2h-1zM261 189h1v1h-1zM262 190h1v1h-1zM263 191h1v2h-1zM264 193h1v1h-1zM265 194h1v1h-1zM266 195h1v2h-1zM267 197h1v1h-1zM268 198h1v1h-1zM269 199h1v2h-1zM270 201h1v2h-1zM271 203h1v2h-1zM272 205h1v2h-1zM273 207h1v1h-1zM274 208h1v2h-1zM275 210h1v2h-1zM276 212h1v2h-1zM277 214h1v2h-1zM278 216h1v2h-1zM279 218h1v2h-1zM280 220h1v2h-1zM281 222h1v2h-1zM282 224h1v2h-1zM283 226h1v2h-1zM284 228h1v2h-1zM285 230h1v2h-1zM286 232h1v1h-1zM287 233h1v2h-1zM288 235h1v1h-1zM289 236h1v2h-1zM290 238h1v1h-1zM291 239h1v2h-1zM292 241h1v1h-1zM293 242h1v2h-1zM294 244h1v1h-1zM295 245h1v2h-1zM296 247h1v2h-1zM297 249h1v1h-1zM298 250h1v2h-1zM299 252h1v1h-1zM300 253h1v1h-1zM301 254h1v1h-1zM302 255h1v1h-1zM303 256h1v1h-1zM304 257h1v1h-1zM305 258h1v1h-1zM306 259h1v1h-1zM307 260h1v1h-1zM308 261h1v1h-1zM309 262h1v1h-1zM310 263h1v1h-1zM311 264h1v1h-1zM312 265h1v2h-1zM313 267h1v1h-1zM314 268h1v1h-1zM315 269h1v1h-1zM316 270h1v1h-1zM317 271h1v1h-1zM318 272h1v1h-1zM319 273h1v1h-1zM320 274h1v2h-1zM321 276h1v1h-1zM322 277h1v1h-1zM323 278h1v1h-1zM324 279h1v1h-1zM325 280h1v1h-1zM326 281h1v1h-1zM327 282h1v1h-1zM328 283h1v1h-1zM329 284h1v1h-1zM330 285h1v1h-1zM361 280h1v1h-1zM366 277h1v1h-1zM369 275h1v1h-1zM374 272h1v1h-1zM375 271h1v1h-1zM376 270h1v1h-1zM379 268h1v1h-1zM380 267h1v1h-1zM381 266h1v1h-1zM382 265h1v1h-1zM385 263h1v1h-1zM386 262h1v1h-1zM389 260h1v1h-1zM406 262h1v1h-1zM409 264h1v1h-1zM410 265h1v1h-1zM411 266h1v1h-1zM414 268h1v1h-1zM415 269h1v1h-1zM416 270h1v1h-1zM417 271h1v1h-1zM418 272h1v1h-1zM421 274h1v1h-1zM422 275h1v1h-1zM425 277h1v1h-1zM426 278h1v1h-1zM429 280h1v1h-1zM430 281h1v2h-1zM431 283h1v1h-1zM432 284h1v1h-1zM433 285h1v2h-1zM434 287h1v2h-1zM435 289h1v2h-1zM436 291h1v2h-1zM437 293h1v2h-1zM438 295h1v1h-1zM439 296h1v1h-1zM440 297h1v2h-1zM441 299h1v1h-1zM442 300h1v1h-1zM443 301h1v2h-1zM444 303h1v1h-1zM445 304h1v1h-1zM446 305h1v1h-1zM447 306h1v1h-1zM448 307h1v1h-1zM449 308h1v1h-1zM450 309h1v1h-1zM451 310h1v1h-1zM452 311h1v1h-1zM453 312h1v1h-1zM454 313h1v1h-1zM455 314h1v1h-1zM456 315h1v1h-1zM457 316h1v2h-1zM458 318h1v1h-1zM459 319h1v1h-1zM460 320h1v1h-1zM461 321h1v1h-1zM462 322h1v1h-1zM463 323h1v1h-1zM464 324h1v1h-1zM465 325h1v1h-1zM466 326h1v1h-1zM467 327h1v2h-1zM468 329h1v1h-1zM469 330h1v1h-1zM470 331h1v2h-1zM471 333h1v1h-1zM472 334h1v1h-1zM473 335h1v1h-1zM474 336h1v1h-1zM475 337h1v1h-1zM504 339h1v1h-1zM505 338h1v1h-1zM508 336h1v1h-1zM509 335h1v1h-1zM510 334h1v1h-1zM511 333h1v1h-1zM512 332h1v1h-1zM513 331h1v1h-1zM514 330h1v1h-1z" fill="#74a1ef" shape-rendering="crispEdges"/>
<path d="M23 172h22v1h-22zM60 172h4v1h-4zM18 170h2v1h-2zM70 170h8v1h-8zM486 280h5v1h-5zM516 280h5v1h-5zM128 137h2v1h-2zM238 137h3v1h-3zM139 130h2v1h-2zM198 130h20v1h-20zM249 142h2v1h-2zM369 222h8v1h-8zM385 222h7v1h-7zM20 171h3v1h-3zM64 171h6v1h-6zM163 122h13v1h-13zM235 136h3v1h-3zM50 174h5v1h-5zM286 174h2v1h-2zM141 129h2v1h-2zM194 129h4v1h-4zM229 134h4v1h-4zM451 259h2v1h-2zM125 139h2v1h-2zM243 139h2v1h-2zM134 133h2v1h-2zM225 133h4v1h-4zM392 223h4v1h-4zM155 123h8v1h-8zM176 123h5v1h-5zM466 270h2v1h-2zM324 204h2v1h-2zM407 229h2v1h-2zM97 161h2v1h-2zM448 257h2v1h-2zM2 166h4v1h-4zM89 166h2v1h-2zM45 173h5v1h-5zM55 173h5v1h-5zM150 124h5v1h-5zM181 124h2v1h-2zM358 220h4v1h-4zM482 279h4v1h-4zM362 221h7v1h-7zM377 221h8v1h-8zM410 231h2v1h-2zM403 227h2v1h-2zM144 127h2v1h-2zM188 127h3v1h-3zM396 224h3v1h-3zM491 281h6v1h-6zM509 281h7v1h-7zM93 164h2v1h-2zM497 282h12v1h-12zM399 225h2v1h-2zM14 169h4v1h-4zM78 169h5v1h-5zM146 126h2v1h-2zM185 126h3v1h-3zM10 168h4v1h-4zM83 168h3v1h-3zM118 144h2v1h-2zM253 144h2v1h-2zM293 180h2v1h-2zM245 140h2v1h-2zM319 200h2v1h-2zM462 267h2v1h-2zM339 216h5v1h-5zM241 138h2v1h-2zM136 132h2v1h-2zM222 132h3v1h-3zM302 188h2v1h-2zM131 135h2v1h-2zM233 135h2v1h-2zM191 128h3v1h-3zM112 149h2v1h-2zM261 149h2v1h-2zM6 167h4v1h-4zM86 167h3v1h-3zM257 146h2v1h-2zM218 131h4v1h-4zM304 189h2v1h-2zM426 241h3v1h-3zM251 143h2v1h-2zM344 217h6v1h-6zM429 242h2v1h-2zM420 238h2v1h-2zM442 253h2v1h-2zM476 277h3v1h-3zM416 235h2v1h-2zM424 240h2v1h-2zM315 198h2v1h-2zM330 209h2v1h-2zM350 218h4v1h-4zM479 278h3v1h-3zM106 154h2v1h-2zM0 165h2v1h-2zM91 165h2v1h-2zM438 250h2v1h-2zM471 274h2v1h-2zM412 232h2v1h-2zM102 157h2v1h-2zM354 219h4v1h-4zM310 194h2v1h-2zM336 214h2v1h-2zM255 145h2v1h-2zM148 125h2v1h-2zM183 125h2v1h-2zM122 141h2v1h-2zM247 141h2v1h-2zM445 255h2v1h-2zM401 226h2v1h-2zM459 265h2v1h-2zM317 199h2v1h-2zM422 239h2v1h-2zM474 276h2v1h-2zM455 262h2v1h-2zM405 228h2v1h-2zM95 163h1v1h-1zM96 162h1v1h-1zM99 160h1v1h-1zM100 159h1v1h-1zM101 158h1v1h-1zM104 156h1v1h-1zM105 155h1v1h-1zM108 153h1v1h-1zM109 152h1v1h-1zM110 151h1v1h-1zM111 150h1v1h-1zM114 148h1v1h-1zM115 147h1v1h-1zM116 146h1v1h-1zM117 145h1v1h-1zM120 143h1v1h-1zM121 142h1v1h-1zM124 140h1v1h-1zM127 138h1v1h-1zM130 136h1v1h-1zM133 134h1v1h-1zM138 131h1v1h-1zM143 128h1v1h-1zM259 147h1v1h-1zM260 148h1v1h-1zM263 150h1v1h-1zM264 151h1v1h-1zM265 152h1v1h-1zM266 153h1v1h-1zM267 154h1v1h-1zM268 155h1v1h-1zM269 156h1v1h-1zM270 157h1v1h-1zM271 158h1v1h-1zM272 159h1v1h-1zM273 160h1v2h-1zM274 162h1v1h-1zM275 163h1v1h-1zM276 164h1v1h-1zM277 165h1v1h-1zM278 166h1v1h-1zM279 167h1v1h-1zM280 168h1v1h-1zM281 169h1v1h-1zM282 170h1v1h-1zM283 171h1v1h-1zM284 172h1v1h-1zM285 173h1v1h-1zM288 175h1v1h-1zM289 176h1v1h-1zM290 177h1v1h-1zM291 178h1v1h-1zM292 179h1v1h-1zM295 181h1v1h-1zM296 182h1v1h-1zM297 183h1v1h-1zM298 184h1v1h-1zM299 185h1v1h-1zM300 186h1v1h-1zM301 187h1v1h-1zM306 190h1v1h-1zM307 191h1v1h-1zM308 192h1v1h-1zM309 193h1v1h-1zM312 195h1v1h-1zM313 196h1v1h-1zM314 197h1v1h-1zM321 201h1v1h-1zM322 202h1v1h-1zM323 203h1v1h-1zM326 205h1v1h-1zM327 206h1v1h-1zM328 207h1v1h-1zM329 208h1v1h-1zM332 210h1v1h-1zM333 211h1v1h-1zM334 212h1v1h-1zM335 213h1v1h-1zM338 215h1v1h-1zM409 230h1v1h-1zM414 233h1v1h-1zM415 234h1v1h-1zM418 236h1v1h-1zM419 237h1v1h-1zM431 243h1v1h-1zM432 244h1v1h-1zM433 245h1v1h-1zM434 246h1v1h-1zM435 247h1v1h-1zM436 248h1v1h-1zM437 249h1v1h-1zM440 251h1v1h-1zM441 252h1v1h-1zM444 254h1v1h-1zM447 256h1v1h-1zM450 258h1v1h-1zM453 260h1v1h-1zM454 261h1v1h-1zM457 263h1v1h-1zM458 264h1v1h-1zM461 266h1v1h-1zM464 268h1v1h-1zM465 269h1v1h-1zM468 271h1v1h-1zM469 272h1v1h-1zM470 273h1v1h-1zM473 275h1v1h-1z" fill="#ff0000" shape-rendering="crispEdges"/>
<g shape-rendering="crispEdges">
<rect x="0" y="98" width="552" height="1" fill="#fafa10"/>
<rect x="0" y="271" width="552" height="1" fill="#fafa10"/>
<rect x="0" y="330" width="552" height="1" fill="#fafa10"/>
</g>
<polygon points="114.9,92.5 124.5,92.5 119.7,101.5" fill="#fdc15e"/>
<line x1="114.0" y1="92.4" x2="125.1" y2="92.4" stroke="#a59a8e" stroke-width="0.8"/>
<polygon points="304.1,239.8 313.7,239.8 308.9,248.8" fill="#fdc15e"/>
<line x1="303.2" y1="239.7" x2="314.3" y2="239.7" stroke="#a59a8e" stroke-width="0.8"/>
<polygon points="392.0,236.4 401.6,236.4 396.8,245.4" fill="#fdc15e"/>
<line x1="391.1" y1="236.3" x2="402.2" y2="236.3" stroke="#a59a8e" stroke-width="0.8"/>
<polygon points="495.8,280.3 505.4,280.3 500.6,289.3" fill="#fdc15e"/>
<line x1="494.9" y1="280.2" x2="506.0" y2="280.2" stroke="#a59a8e" stroke-width="0.8"/>
<polygon points="300.2,230.2 304.5,239.9 293.1,239.9" fill="#68c6ff"/>
<polyline points="300.1,230.1 292.8,240.3 304.6,240.3" fill="none" stroke="#a59a8e" stroke-width="0.8"/>
<rect x="292.9" y="240.8" width="8.4" height="1.3" fill="#68c6ff"/>
<line x1="292.2" y1="242.5" x2="302.8" y2="242.5" stroke="#a59a8e" stroke-width="0.8"/>
<polygon points="469.4,329.0 478.8,329.0 474.1,319.2" fill="#68c6ff"/>
<polyline points="474.1,319.0 469.1,329.4 479.9,329.4" fill="none" stroke="#a59a8e" stroke-width="0.8"/>
<polygon points="472.6,321.1 482.0,321.1 477.3,311.3" fill="#68c6ff"/>
<polyline points="477.3,311.1 472.3,321.5 483.1,321.5" fill="none" stroke="#a59a8e" stroke-width="0.8"/>
<g shape-rendering="crispEdges">
<rect x="0" y="434" width="7" height="11" fill="#fd0000"/>
<rect x="9" y="434" width="7" height="11" fill="#00fc00"/>
<rect x="18" y="434" width="7" height="11" fill="#fd0000"/>
<rect x="27" y="434" width="7" height="10" fill="#00fc00"/>
<rect x="36" y="434" width="7" height="8" fill="#00fc00"/>
<rect x="45" y="434" width="7" height="8" fill="#00fc00"/>
<rect x="54" y="434" width="7" height="5" fill="#00fc00"/>
<rect x="63" y="434" width="7" height="3" fill="#00fc00"/>
<rect x="72" y="434" width="7" height="3" fill="#00fc00"/>
<rect x="81" y="434" width="7" height="1" fill="#00fc00"/>
<rect x="90" y="431" width="7" height="3" fill="#00fc00"/>
<rect x="99" y="428" width="7" height="6" fill="#00fc00"/>
<rect x="108" y="426" width="7" height="8" fill="#00fc00"/>
<rect x="117" y="423" width="7" height="11" fill="#00fc00"/>
<rect x="126" y="423" width="7" height="11" fill="#fd0000"/>
<rect x="135" y="424" width="7" height="10" fill="#fd0000"/>
<rect x="144" y="425" width="7" height="9" fill="#fd0000"/>
<rect x="153" y="429" width="7" height="5" fill="#fd0000"/>
<rect x="162" y="431" width="7" height="3" fill="#fd0000"/>
<rect x="180" y="434" width="7" height="4" fill="#fd0000"/>
<rect x="189" y="434" width="7" height="7" fill="#fd0000"/>
<rect x="198" y="434" width="7" height="7" fill="#fd0000"/>
<rect x="207" y="434" width="7" height="7" fill="#00fc00"/>
<rect x="216" y="434" width="7" height="8" fill="#fd0000"/>
<rect x="225" y="434" width="7" height="9" fill="#fd0000"/>
<rect x="234" y="434" width="7" height="10" fill="#fd0000"/>
<rect x="243" y="434" width="7" height="11" fill="#fd0000"/>
<rect x="252" y="434" width="7" height="12" fill="#fd0000"/>
<rect x="261" y="434" width="7" height="15" fill="#fd0000"/>
<rect x="270" y="434" width="7" height="18" fill="#fd0000"/>
<rect x="279" y="434" width="7" height="19" fill="#fd0000"/>
<rect x="288" y="434" width="7" height="20" fill="#fd0000"/>
<rect x="297" y="434" width="7" height="19" fill="#00fc00"/>
<rect x="306" y="434" width="7" height="17" fill="#00fc00"/>
<rect x="315" y="434" width="7" height="15" fill="#00fc00"/>
<rect x="324" y="434" width="7" height="15" fill="#fd0000"/>
<rect x="333" y="434" width="7" height="13" fill="#00fc00"/>
<rect x="342" y="434" width="7" height="9" fill="#00fc00"/>
<rect x="351" y="434" width="7" height="6" fill="#00fc00"/>
<rect x="360" y="434" width="7" height="3" fill="#00fc00"/>
<rect x="369" y="434" width="7" height="1" fill="#00fc00"/>
<rect x="378" y="432" width="7" height="2" fill="#00fc00"/>
<rect x="387" y="431" width="7" height="3" fill="#00fc00"/>
<rect x="396" y="432" width="7" height="2" fill="#fd0000"/>
<rect x="414" y="434" width="7" height="2" fill="#fd0000"/>
<rect x="423" y="434" width="7" height="3" fill="#fd0000"/>
<rect x="432" y="434" width="7" height="5" fill="#fd0000"/>
<rect x="441" y="434" width="7" height="6" fill="#fd0000"/>
<rect x="450" y="434" width="7" height="7" fill="#fd0000"/>
<rect x="459" y="434" width="7" height="7" fill="#fd0000"/>
<rect x="468" y="434" width="7" height="7" fill="#00fc00"/>
<rect x="477" y="434" width="7" height="5" fill="#00fc00"/>
<rect x="486" y="434" width="7" height="2" fill="#00fc00"/>
<rect x="495" y="433" width="7" height="1" fill="#00fc00"/>
<rect x="504" y="430" width="7" height="4" fill="#00fc00"/>
<rect x="513" y="427" width="7" height="7" fill="#00fc00"/>
</g>
<path d="M294 463h2v1h-2zM387 463h4v1h-4zM401 463h5v1h-5zM302 466h3v1h-3zM378 466h2v1h-2zM414 466h3v1h-3zM518 466h2v1h-2zM23 428h5v1h-5zM58 428h5v1h-5zM76 428h7v1h-7zM237 428h2v1h-2zM28 429h17v1h-17zM55 429h3v1h-3zM239 429h2v1h-2zM116 410h2v1h-2zM181 410h2v1h-2zM309 468h4v1h-4zM370 468h4v1h-4zM422 468h6v1h-6zM513 468h2v1h-2zM296 464h3v1h-3zM383 464h4v1h-4zM406 464h5v1h-5zM137 402h8v1h-8zM153 402h4v1h-4zM45 430h10v1h-10zM241 430h2v1h-2zM130 404h3v1h-3zM161 404h4v1h-4zM14 424h3v1h-3zM91 424h2v1h-2zM223 424h4v1h-4zM21 427h2v1h-2zM63 427h13v1h-13zM83 427h4v1h-4zM234 427h3v1h-3zM321 472h2v1h-2zM355 472h6v1h-6zM436 472h4v1h-4zM505 472h2v1h-2zM127 405h3v1h-3zM165 405h5v1h-5zM333 476h12v1h-12zM450 476h3v1h-3zM493 476h4v1h-4zM299 465h3v1h-3zM380 465h3v1h-3zM411 465h3v1h-3zM520 465h2v1h-2zM279 454h2v1h-2zM313 469h2v1h-2zM367 469h3v1h-3zM428 469h2v1h-2zM511 469h2v1h-2zM260 440h2v1h-2zM253 436h2v1h-2zM145 401h8v1h-8zM19 426h2v1h-2zM87 426h2v1h-2zM231 426h3v1h-3zM255 437h2v1h-2zM318 471h3v1h-3zM361 471h3v1h-3zM433 471h3v1h-3zM507 471h2v1h-2zM323 473h3v1h-3zM350 473h5v1h-5zM440 473h4v1h-4zM503 473h2v1h-2zM249 434h2v1h-2zM292 462h2v1h-2zM391 462h10v1h-10zM125 406h2v1h-2zM170 406h4v1h-4zM2 421h4v1h-4zM96 421h2v1h-2zM215 421h2v1h-2zM326 474h2v1h-2zM347 474h3v1h-3zM444 474h3v1h-3zM501 474h2v1h-2zM17 425h2v1h-2zM89 425h2v1h-2zM227 425h4v1h-4zM113 411h3v1h-3zM183 411h2v1h-2zM245 432h2v1h-2zM198 418h4v1h-4zM472 481h5v1h-5zM328 475h5v1h-5zM345 475h2v1h-2zM447 475h3v1h-3zM497 475h4v1h-4zM122 407h3v1h-3zM174 407h3v1h-3zM315 470h3v1h-3zM364 470h3v1h-3zM430 470h3v1h-3zM509 470h2v1h-2zM457 478h5v1h-5zM485 478h4v1h-4zM0 420h2v1h-2zM209 420h6v1h-6zM305 467h4v1h-4zM374 467h4v1h-4zM417 467h5v1h-5zM515 467h3v1h-3zM462 479h6v1h-6zM481 479h4v1h-4zM274 450h2v1h-2zM111 412h2v1h-2zM185 412h2v1h-2zM120 408h2v1h-2zM177 408h2v1h-2zM104 416h2v1h-2zM193 416h2v1h-2zM453 477h4v1h-4zM489 477h4v1h-4zM10 423h4v1h-4zM93 423h2v1h-2zM220 423h3v1h-3zM133 403h4v1h-4zM157 403h4v1h-4zM109 413h2v1h-2zM187 413h2v1h-2zM102 417h2v1h-2zM195 417h3v1h-3zM468 480h4v1h-4zM477 480h4v1h-4zM6 422h4v1h-4zM217 422h3v1h-3zM191 415h2v1h-2zM269 446h2v1h-2zM288 459h2v1h-2zM281 455h2v1h-2zM118 409h2v1h-2zM179 409h2v1h-2zM266 444h2v1h-2zM285 457h2v1h-2zM283 456h2v1h-2zM107 414h2v1h-2zM189 414h2v1h-2zM99 419h2v1h-2zM202 419h7v1h-7zM258 439h2v1h-2zM243 431h2v1h-2zM247 433h2v1h-2zM263 442h2v1h-2zM251 435h2v1h-2zM95 422h1v1h-1zM98 420h1v1h-1zM101 418h1v1h-1zM106 415h1v1h-1zM257 438h1v1h-1zM262 441h1v1h-1zM265 443h1v1h-1zM268 445h1v1h-1zM271 447h1v1h-1zM272 448h1v1h-1zM273 449h1v1h-1zM276 451h1v1h-1zM277 452h1v1h-1zM278 453h1v1h-1zM287 458h1v1h-1zM290 460h1v1h-1zM291 461h1v1h-1z" fill="#74a1ef" shape-rendering="crispEdges"/>
<path d="M62 425h38v1h-38zM256 425h2v1h-2zM479 475h25v1h-25zM350 466h7v1h-7zM380 466h17v1h-17zM414 466h22v1h-22zM447 469h6v1h-6zM331 460h2v1h-2zM31 420h6v1h-6zM112 420h5v1h-5zM237 420h3v1h-3zM261 427h3v1h-3zM12 414h3v1h-3zM133 414h4v1h-4zM209 414h6v1h-6zM27 419h4v1h-4zM117 419h4v1h-4zM234 419h3v1h-3zM283 438h2v1h-2zM468 473h4v1h-4zM512 473h7v1h-7zM324 457h3v1h-3zM162 408h17v1h-17zM357 467h23v1h-23zM436 467h4v1h-4zM54 424h8v1h-8zM100 424h2v1h-2zM252 424h4v1h-4zM338 463h4v1h-4zM6 412h4v1h-4zM141 412h3v1h-3zM198 412h4v1h-4zM15 415h3v1h-3zM130 415h3v1h-3zM215 415h4v1h-4zM154 409h8v1h-8zM179 409h11v1h-11zM279 436h2v1h-2zM272 432h2v1h-2zM462 472h6v1h-6zM519 472h3v1h-3zM440 468h7v1h-7zM43 422h4v1h-4zM105 422h3v1h-3zM244 422h4v1h-4zM10 413h2v1h-2zM137 413h4v1h-4zM202 413h7v1h-7zM18 416h2v1h-2zM127 416h3v1h-3zM219 416h6v1h-6zM0 410h2v1h-2zM148 410h6v1h-6zM190 410h4v1h-4zM37 421h6v1h-6zM108 421h4v1h-4zM240 421h4v1h-4zM264 428h2v1h-2zM276 434h2v1h-2zM346 465h4v1h-4zM397 465h17v1h-17zM47 423h7v1h-7zM102 423h3v1h-3zM248 423h4v1h-4zM453 470h4v1h-4zM342 464h4v1h-4zM20 417h3v1h-3zM125 417h2v1h-2zM225 417h6v1h-6zM472 474h7v1h-7zM504 474h8v1h-8zM23 418h4v1h-4zM121 418h4v1h-4zM231 418h3v1h-3zM292 443h2v1h-2zM318 455h3v1h-3zM2 411h4v1h-4zM144 411h4v1h-4zM194 411h4v1h-4zM281 437h2v1h-2zM312 452h2v1h-2zM457 471h5v1h-5zM290 442h2v1h-2zM314 453h2v1h-2zM285 439h2v1h-2zM316 454h2v1h-2zM307 450h3v1h-3zM300 447h2v1h-2zM302 448h3v1h-3zM287 440h2v1h-2zM296 445h2v1h-2zM327 458h2v1h-2zM321 456h3v1h-3zM274 433h2v1h-2zM268 430h2v1h-2zM270 431h2v1h-2zM333 461h2v1h-2zM335 462h3v1h-3zM266 429h2v1h-2zM329 459h2v1h-2zM258 426h3v1h-3zM298 446h2v1h-2zM294 444h2v1h-2zM305 449h2v1h-2zM310 451h2v1h-2zM278 435h1v1h-1zM289 441h1v1h-1z" fill="#c8c8c8" shape-rendering="crispEdges"/>
<g shape-rendering="crispEdges">
<rect x="419" y="13" width="61" height="17" fill="#8d8781"/>
<rect x="420" y="14" width="59" height="15" fill="#ffffff"/>
<rect x="483" y="13" width="61" height="17" fill="#8d8781"/>
<rect x="484" y="14" width="59" height="15" fill="#ffffff"/>
<rect x="547" y="13" width="33" height="17" fill="#8d8781"/>
<rect x="548" y="14" width="31" height="15" fill="#ffffff"/>
<rect x="563" y="14" width="1" height="15" fill="#8d8781"/>
<rect x="583" y="13" width="17" height="17" fill="#8d8781"/>
<rect x="584" y="14" width="15" height="15" fill="#ffffff"/>
<rect x="551" y="17" width="1" height="6" fill="#000"/>
<rect x="553" y="20" width="1" height="5" fill="#000"/>
<rect x="555" y="19" width="1" height="7" fill="#000"/>
<rect x="557" y="18" width="1" height="7" fill="#000"/>
<rect x="559" y="17" width="1" height="5" fill="#000"/>
<rect x="586" y="19" width="8" height="8" fill="#001c84"/><rect x="587" y="21" width="6" height="5" fill="#fff"/>
<rect x="589" y="16" width="8" height="8" fill="#001c84"/><rect x="590" y="18" width="6" height="5" fill="#fff"/>
</g>
<line x1="568.1" y1="25.9" x2="575.1" y2="18.4" stroke="#15293d" stroke-width="1.3"/>
<text x="449" y="25" fill="#000" text-anchor="middle" style="font-size:10px" letter-spacing="0.1">Kaufen</text>
<text x="513.3" y="25" fill="#000" text-anchor="middle" style="font-size:10px" letter-spacing="0.1">Verkaufen</text>
</svg></body></html>
